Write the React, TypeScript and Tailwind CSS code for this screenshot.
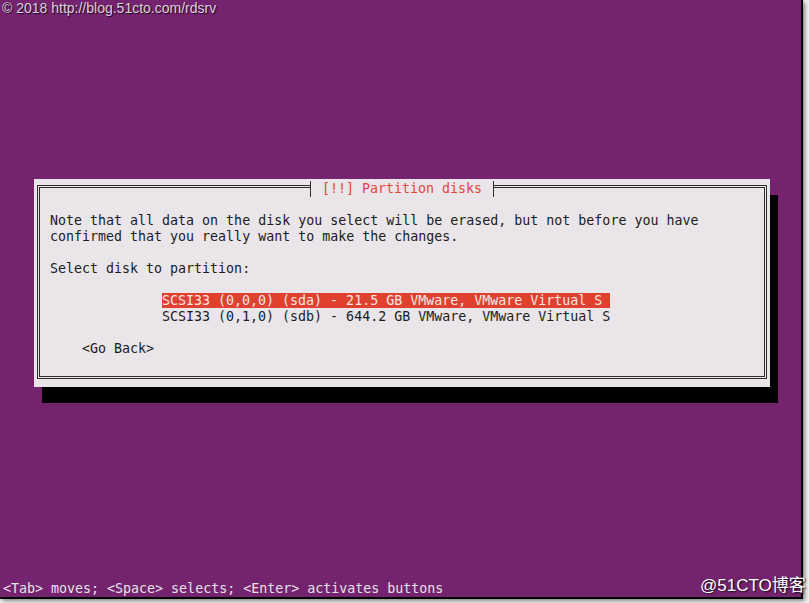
import React from "react";

const mono = { fontFamily: '"DejaVu Sans Mono", "Liberation Mono", monospace' };

export default function App() {
  return (
    <div className="w-[809px] h-[603px] bg-[#f2f2f2] overflow-hidden relative">
      <div
        className="w-[803px] h-[599px] bg-[#74246f] border-r-2 border-b-2 border-black flex flex-col pl-[2px] pt-[3px] shadow-[2px_2px_4px_rgba(0,0,0,0.45)] text-[13.3px] leading-[16px]"
        style={mono}
      >
        <div className="h-[176px] shrink-0" />
        {/* dialog */}
        <div className="ml-[32px] w-[736px] h-[208px] bg-[#e9e5e9] shadow-[8px_16px_0_0_#000] pl-[3px] pr-[3px] pt-[6px] pb-[8px] shrink-0">
          <div className="relative h-full border-[3px] border-double border-[#2e2e2e]">
            <div className="absolute top-[-7px] left-[270px] h-[16px] bg-[#e9e5e9] border-l border-r border-[#2e2e2e] pl-[11px] pr-[11px] text-[#e5463a] whitespace-pre">
              [!!] Partition disks
            </div>
            <div className="pl-[10px] pt-[25px] text-[#1c1c1c] whitespace-pre">
              <div className="h-[16px]">Note that all data on the disk you select will be erased, but not before you have</div>
              <div className="h-[16px]">confirmed that you really want to make the changes.</div>
              <div className="h-[16px]" />
              <div className="h-[16px]">Select disk to partition:</div>
              <div className="h-[16px]" />
              <div className="h-[16px] pl-[112px]">
                <span className="bg-[#e0412f] text-[#f6e6e4]">SCSI33 (0,0,0) (sda) - 21.5 GB VMware, VMware Virtual S </span>
              </div>
              <div className="h-[16px] pl-[112px]">SCSI33 (0,1,0) (sdb) - 644.2 GB VMware, VMware Virtual S</div>
              <div className="h-[16px]" />
              <div className="h-[16px] pl-[32px]">&lt;Go Back&gt;</div>
            </div>
          </div>
        </div>
        <div className="mt-auto h-[19px] pt-[3px] pl-[1px] text-[#e8e2e8] whitespace-pre">
          &lt;Tab&gt; moves; &lt;Space&gt; selects; &lt;Enter&gt; activates buttons
        </div>
      </div>
      {/* watermarks */}
      <div
        className="absolute left-[2px] top-[-2px] text-[14px] text-[#dcd0dc] whitespace-pre [text-shadow:1px_1px_1px_rgba(0,0,0,0.8)]"
        style={{ fontFamily: '"Liberation Sans", Arial, sans-serif' }}
      >
        © 2018 http://blog.51cto.com/rdsrv
      </div>
      <div
        className="absolute left-[700px] top-[573px] text-[17px] text-white whitespace-pre [text-shadow:1px_1px_2px_rgba(0,0,0,0.9)]"
        style={{ fontFamily: '"Liberation Sans", "Noto Sans CJK SC", Arial, sans-serif' }}
      >
        @51CTO博客
      </div>
    </div>
  );
}
